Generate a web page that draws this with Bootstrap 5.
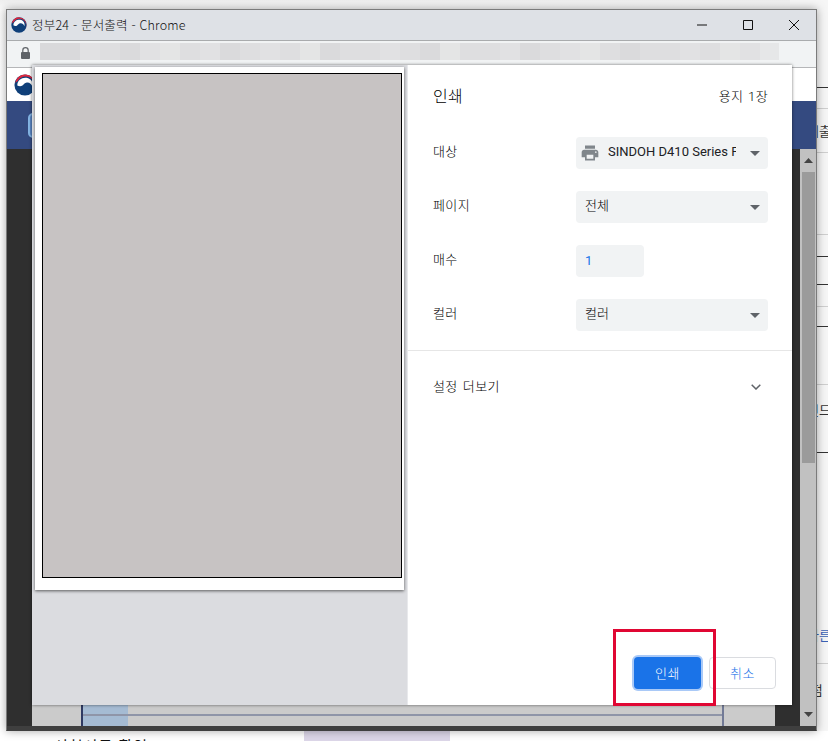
<!DOCTYPE html>
<html lang="ko">
<head>
<meta charset="utf-8">
<title>인쇄</title>
<link href="https://cdn.jsdelivr.net/npm/bootstrap@5.3.0/dist/css/bootstrap.min.css" rel="stylesheet">
<style>
html,body{margin:0;height:741px;overflow:hidden;background:#f4f4f4}
body{font-family:"Roboto","Noto Sans CJK KR",sans-serif;color:#202124;font-size:13px}
.desk{position:relative;width:828px;height:741px;overflow:hidden;background:linear-gradient(#efefef,#fafafa 9px,#fff 70px)}
.under-strip{position:absolute;left:790px;top:0;width:60px;height:731px;display:grid;grid-template-rows:88px 21px 44px 82px 22px 28px 22px 20px 58px 68px 211px 67px;font-family:"Noto Sans CJK KR",sans-serif;font-size:13px;line-height:1;color:#333;background:#f6f6f6}
.under-strip>div{padding-left:17px;white-space:nowrap;overflow:hidden;display:flex;align-items:center}
.ln-k{border-bottom:1px solid #333}
.ln-g{border-bottom:1px solid #cfcfcf}
.under-strip>.under-top{align-items:flex-start;padding-top:18px}
.under-strip>.under-link{color:#3b63b8;align-items:flex-end;padding-bottom:22px}
.under-strip>.under-low{align-items:flex-start;padding-top:19px}
.under-foot{position:absolute;left:0;right:0;top:731px;height:10px;display:flex;overflow:hidden;font-family:"Noto Sans CJK KR",sans-serif;font-size:15px;line-height:1}
.under-text{width:304px;padding:7px 0 0 54px;color:#111;white-space:nowrap;letter-spacing:1px}
.under-violet{width:146px;background:#dcd6e8}
.win{position:absolute;left:6px;top:9px;width:811px;height:722px;display:flex;flex-direction:column;border:1px solid #7b7b7b;border-bottom-color:#3f3f3f;box-shadow:0 0 9px rgba(0,0,0,.35);background:#2f2f2f}
.tbar{height:30px;flex:none;background:#dee1e6;display:flex;align-items:center;padding:0 0 0 4px}
.tbar-title{font-family:"Noto Sans CJK KR",sans-serif;font-size:12.5px;font-weight:300;letter-spacing:.2px;color:#111;margin-left:5px;line-height:1;white-space:nowrap}
.ctrls{margin-left:auto;display:flex;align-items:center;height:100%;padding-right:17px;gap:36px}
.abar{height:28px;flex:none;background:#f1f3f4;border-top:1px solid #a9abad;border-bottom:1px solid #b5b6b8;display:flex;padding:2px 0 0 14px}
.blur-row{display:flex;margin-left:10px;height:17px}
.blur-row span{width:20px;background:#dedee0}
.blur-row span:nth-child(3n){background:#e1e1e3}
.blur-row span:nth-child(5n){background:#dadadc}
.blur-row span:nth-child(7n){background:#e4e5e5}
.blur-row span:nth-child(-n+2){background:#d9d9db}
.blur-row span:last-child{background:#e6e7e8;width:19px}
.pg-head{height:33px;flex:none;background:#fff;padding:6px 0 0 7px;display:flex;align-items:flex-start}
.pg-blue{height:48px;flex:none;background:#344a80;padding:12px 0 0 21px}
.pg-pill{width:12px;height:25px;border:2px solid #83b4e4;border-radius:5px;background:#5b86c4}
.pg-body{flex:1;min-height:0;display:flex}
.pg-main{flex:1;display:flex;flex-direction:column;justify-content:flex-end;background:#2f2f2f}
.pg-strip{height:21px;margin:0 25px;background:#cbcbcb;display:flex;padding-left:49px}
.pg-cell{width:47px;flex:none;background:#a5bbd3;border-left:2px solid #2f3a63}
.pg-track{flex:1;height:2px;margin:9px 0 0 -45px;background:#8f95a8}
.pg-end{width:2px;flex:none;margin-right:51px;background:#727a96}
.scrollb{width:16px;flex:none;background:#c1c1c1;display:flex;flex-direction:column;align-items:center}
.sb-btn{height:23px;flex:none;display:flex;align-items:center;justify-content:center}
.sb-thumb{width:13px;height:291px;flex:none;background:#9b9b9b}
.sb-fill{flex:1}
.pg-bottom{height:4px;flex:none;background:#3f3f3f}
.dlg{position:absolute;left:25px;top:55px;width:760px;height:640px;background:#fff;display:flex;box-shadow:0 0 3px rgba(0,0,0,.55)}
.prev{width:376px;flex:none;background:#dbdce0;border-right:1px solid #e8e9ec;padding:2px 0 0 3px}
.paper{width:369px;height:523px;background:#fff;padding:6px 0 0 7px;box-shadow:0 1px 3px rgba(0,0,0,.6)}
.paper-gray{width:360px;height:505px;background:#c7c3c3;border:1px solid #000}
.opts{flex:1;display:flex;flex-direction:column;min-width:0;font-weight:300;letter-spacing:.4px;color:#000}
.opt-head{height:62px;flex:none;padding:2px 24px 0 25px;display:flex;align-items:center;justify-content:space-between;margin-bottom:10px}
.opt-title{font-size:16px;font-weight:300;margin:0;color:#000}
.opt-count{font-size:13px;color:#000;word-spacing:1px}
.opt-row{height:32px;flex:none;margin-bottom:22px;padding:0 24px 0 25px;display:flex;align-items:center;justify-content:space-between}
.opt-lab{line-height:1;margin:0;font-size:13px;padding-bottom:4px}
.opt-wrap{position:relative;width:192px}
.form-select.opt-sel,.form-control.opt-num{height:32px;font-size:13px;font-weight:300;line-height:1;color:#000;background-color:#f1f3f4;border:0;border-radius:4px;padding:0 32px 3px 9px;font-family:inherit;box-shadow:none}
.form-select.opt-sel{width:192px;background-image:url("data:image/svg+xml,%3Csvg xmlns='http://www.w3.org/2000/svg' width='10' height='5'%3E%3Cpath d='M0 0h10L5 5z' fill='%235f6368'/%3E%3C/svg%3E");background-size:10px 5px;background-position:right 8px center;background-repeat:no-repeat}
.form-select.opt-dest{padding-left:32px;font-weight:400;letter-spacing:0;color:#202124}
.opt-ico{position:absolute;left:4px;top:6px;pointer-events:none}
.form-control.opt-num{width:68px;color:#1a73e8;padding:0 9px 2px;font-weight:400}
.opt-sep{border-top:1px solid #e6e6e6;margin-top:-3px;height:73px;flex:none;display:flex;align-items:center;justify-content:space-between;padding:0 31px 0 25px;word-spacing:1.5px}
.opt-foot{margin-top:auto;padding:0 16px 16px 0;display:flex;justify-content:flex-end;gap:8px}
.btn.act-print,.btn.act-cancel{width:67px;height:32px;padding:0;font-size:13px;font-weight:300;line-height:1;border-radius:4px;letter-spacing:.5px}
.btn.act-print{background:#1a73e8;border:0;color:#fff;box-shadow:0 0 0 2px #a9c9f7}
.btn.act-cancel{background:#fff;border:1px solid #dadce0;color:#1a73e8}
.mark-box{position:absolute;left:613px;top:629px;width:103px;height:77px;border:3px solid #e00733;pointer-events:none}
</style>
</head>
<body>
<div class="desk">
  <div class="under-strip">
    <div class="ln-k"></div>
    <div class="ln-g"></div>
    <div class="ln-g">제출</div>
    <div class="ln-g"></div>
    <div class="ln-k"></div>
    <div class="ln-k"></div>
    <div class="ln-g"></div>
    <div class="ln-k"></div>
    <div class="ln-g"></div>
    <div class="ln-k under-top">인드</div>
    <div class="ln-g under-link">바른</div>
    <div class="under-low">&nbsp;점</div>
  </div>
  <div class="under-foot">
    <div class="under-text">신청서류 확인</div>
    <div class="under-violet"></div>
  </div>

  <div class="win">
    <div class="tbar">
      <svg width="16" height="16" viewBox="0 0 24 24" aria-hidden="true"><circle cx="12" cy="12" r="11.5" fill="#0f3f79"/><path d="M1.2 9.5A11 11 0 0 1 23 12a11 11 0 0 1-1.5 5.5A9 9 0 0 0 3.8 8z" fill="#e1263c"/><path d="M3.6 12.5C3.6 6.5 9 3.4 13.8 4.2 18.6 5 21.5 9.5 20 14c-.7-3.2-3.4-5-6-4.6-2.6.3-3.4 2.2-4.8 3.2-1.6 1.2-4 1-5.6-.1z" fill="#fff"/></svg>
      <span class="tbar-title">정부24 - 문서출력 - Chrome</span>
      <div class="ctrls">
        <svg width="10" height="10" viewBox="0 0 10 10" aria-hidden="true"><path d="M0 5h10" stroke="#111" fill="none"/></svg>
        <svg width="10" height="10" viewBox="0 0 10 10" aria-hidden="true"><path d="M.5.5h9v9h-9z" stroke="#111" fill="none"/></svg>
        <svg width="10" height="10" viewBox="0 0 10 10" aria-hidden="true"><path d="M0 0l10 10M10 0L0 10" stroke="#111" fill="none"/></svg>
      </div>
    </div>
    <div class="abar">
      <svg class="mt-1" width="9" height="12" viewBox="0 0 9 12" aria-hidden="true"><path d="M1.8 5V3.4a2.7 2.7 0 0 1 5.4 0V5" stroke="#5f6368" stroke-width="1.2" fill="none"/><rect x="0" y="5" width="9" height="7" rx="1" fill="#5f6368"/></svg>
      <div class="blur-row"><span></span><span></span><span></span><span></span><span></span><span></span><span></span><span></span><span></span><span></span><span></span><span></span><span></span><span></span><span></span><span></span><span></span><span></span><span></span><span></span><span></span><span></span><span></span><span></span><span></span><span></span><span></span><span></span><span></span><span></span><span></span><span></span><span></span><span></span><span></span><span></span><span></span></div>
    </div>
    <div class="pg-head">
      <svg width="22" height="22" viewBox="0 0 24 24" aria-hidden="true"><circle cx="12" cy="12" r="11.5" fill="#0f3f79"/><path d="M1.2 9.5A11 11 0 0 1 23 12a11 11 0 0 1-1.5 5.5A9 9 0 0 0 3.8 8z" fill="#e1263c"/><path d="M3.6 12.5C3.6 6.5 9 3.4 13.8 4.2 18.6 5 21.5 9.5 20 14c-.7-3.2-3.4-5-6-4.6-2.6.3-3.4 2.2-4.8 3.2-1.6 1.2-4 1-5.6-.1z" fill="#fff"/></svg>
    </div>
    <div class="pg-blue"><div class="pg-pill"></div></div>
    <div class="pg-body">
      <div class="pg-main">
        <div class="pg-strip">
          <div class="pg-cell"></div>
          <div class="pg-track"></div>
          <div class="pg-end"></div>
        </div>
      </div>
      <div class="scrollb">
        <div class="sb-btn"><svg width="9" height="5" viewBox="0 0 9 5" aria-hidden="true"><path d="M4.5 0L9 5H0z" fill="#444"/></svg></div>
        <div class="sb-thumb"></div>
        <div class="sb-fill"></div>
        <div class="sb-btn"><svg width="9" height="5" viewBox="0 0 9 5" aria-hidden="true"><path d="M0 0h9L4.5 5z" fill="#444"/></svg></div>
      </div>
    </div>
    <div class="pg-bottom"></div>

    <div class="dlg">
      <div class="prev">
        <div class="paper"><div class="paper-gray"></div></div>
      </div>
      <div class="opts">
        <div class="opt-head">
          <h1 class="opt-title">인쇄</h1>
          <span class="opt-count">용지 1장</span>
        </div>
        <div class="opt-row">
          <label class="opt-lab">대상</label>
          <div class="opt-wrap">
            <select class="form-select opt-sel opt-dest"><option>SINDOH D410 Series PCL</option></select>
            <svg class="opt-ico" width="20" height="20" viewBox="0 0 24 24" aria-hidden="true"><path fill="#80868b" d="M19 8H5c-1.66 0-3 1.34-3 3v6h4v4h12v-4h4v-6c0-1.66-1.34-3-3-3zm-3 11H8v-5h8v5zm3-7c-.55 0-1-.45-1-1s.45-1 1-1 1 .45 1 1-.45 1-1 1zm-1-9H6v4h12V3z"/></svg>
          </div>
        </div>
        <div class="opt-row">
          <label class="opt-lab">페이지</label>
          <select class="form-select opt-sel"><option>전체</option></select>
        </div>
        <div class="opt-row">
          <label class="opt-lab">매수</label>
          <div class="opt-wrap"><input class="form-control opt-num" value="1"></div>
        </div>
        <div class="opt-row">
          <label class="opt-lab">컬러</label>
          <select class="form-select opt-sel"><option>컬러</option></select>
        </div>
        <div class="opt-sep">
          <span>설정 더보기</span>
          <svg width="10" height="6" viewBox="0 0 10 6" aria-hidden="true"><path d="M.7.7L5 5l4.3-4.3" stroke="#5f6368" stroke-width="1.5" fill="none"/></svg>
        </div>
        <div class="opt-foot">
          <button type="button" class="btn act-print">인쇄</button>
          <button type="button" class="btn act-cancel">취소</button>
        </div>
      </div>
    </div>
  </div>
  <div class="mark-box"></div>
</div>
<script src="https://cdn.jsdelivr.net/npm/bootstrap@5.3.0/dist/js/bootstrap.bundle.min.js"></script>
</body>
</html>
